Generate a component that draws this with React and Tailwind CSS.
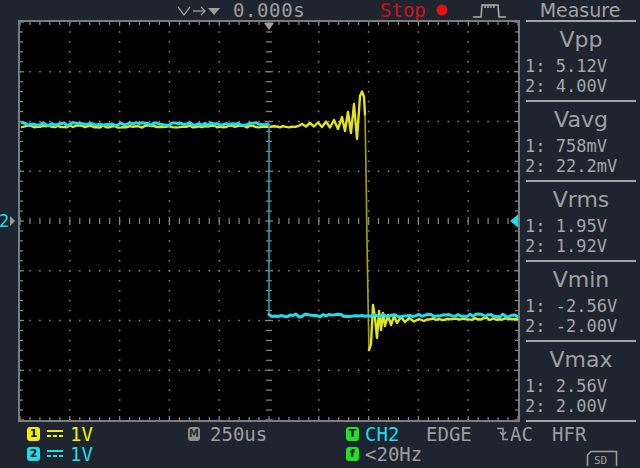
import React from 'react';

const W = 498;
const H = 398;
const CX = 249;
const CY = 199;

const rnd = (i) => {
  const s = Math.sin(i * 12.9898 + 78.233) * 43758.5453;
  return s - Math.floor(s);
};

// flat part of a trace with a little noise, in screen coords
const noisy = (x0, x1, y, amp, seed, step = 3) => {
  const pts = [];
  for (let x = x0; x <= x1; x += step) {
    pts.push([x, +(y + (rnd(x + seed) - 0.5) * amp).toFixed(1)]);
  }
  return pts;
};

const toStr = (pts) => pts.map((p) => p.join(',')).join(' ');

const ringHigh = [
  [302, 124], [306, 126.5], [310, 123], [314, 126.5], [318, 122.5], [322, 127],
  [326, 121.5], [330, 127.5], [334, 120], [338, 129], [342, 117], [345, 131],
  [348, 112], [351, 133], [354, 104], [357, 139], [360, 96], [362, 91.5],
  [364, 97], [365, 115],
];

const ringLow = [
  [369, 350], [371, 344], [373, 305], [375, 318], [377, 338], [379, 311],
  [381, 330], [383, 313], [385, 326], [388, 315], [391, 325], [394, 316],
  [397, 323], [401, 317], [405, 322], [409, 318], [414, 321.5], [419, 319],
  [424, 321],
];

const yellowA = [...noisy(22, 299, 126.5, 2.2, 700), ...ringHigh];
const yellowB = [...ringLow, ...noisy(427, 518, 319, 2.2, 900)];
const cyanHigh = noisy(22, 269, 124, 2.8, 0);
const cyanLow = noisy(269, 518, 315.5, 2.8, 300);

const Screen = () => {
  const vLines = [1, 2, 3, 4, 6, 7, 8, 9].map((i) => (i * W) / 10);
  const hLines = [1, 2, 3, 5, 6, 7].map((i) => (i * H) / 8);
  const xTicks = Array.from({ length: 51 }, (_, i) => (i * W) / 50);
  const yTicks = Array.from({ length: 41 }, (_, i) => (i * H) / 40);
  const grid = '#8a8a8a';

  return (
    <svg width={W} height={H} viewBox={`0 0 ${W} ${H}`} className="block">
      {vLines.map((x) => (
        <line key={'v' + x} x1={x} y1={0} x2={x} y2={H} stroke={grid} strokeWidth="1.5" strokeDasharray="1.5 8.45" strokeDashoffset="0.75" />
      ))}
      {hLines.map((y) => (
        <line key={'h' + y} x1={0} y1={y} x2={W} y2={y} stroke={grid} strokeWidth="1.5" strokeDasharray="1.5 8.46" strokeDashoffset="0.75" />
      ))}
      {xTicks.map((x, i) => (
        <g key={'xt' + i} stroke={grid} strokeWidth="1.2">
          <line x1={x} y1={0} x2={x} y2={i % 5 === 0 ? 4 : 3} />
          <line x1={x} y1={H} x2={x} y2={H - (i % 5 === 0 ? 4 : 3)} />
          <line x1={x} y1={CY - (i % 5 === 0 ? 4 : 3)} x2={x} y2={CY + (i % 5 === 0 ? 4 : 3)} />
        </g>
      ))}
      {yTicks.map((y, i) => (
        <g key={'yt' + i} stroke={grid} strokeWidth="1.2">
          <line x1={0} y1={y} x2={i % 5 === 0 ? 4 : 3} y2={y} />
          <line x1={W} y1={y} x2={W - (i % 5 === 0 ? 4 : 3)} y2={y} />
          <line x1={CX - (i % 5 === 0 ? 4 : 3)} y1={y} x2={CX + (i % 5 === 0 ? 4 : 3)} y2={y} />
        </g>
      ))}

      {/* trigger markers */}
      <polygon points="244,1 254,1 249,8" fill="#a0a0a0" />
      <polygon points="490,199 498,192.5 498,205.5" fill="#1fdcea" />

      {/* traces, in screen coords */}
      <g transform="translate(-20,-22)" fill="none" strokeLinejoin="round" strokeLinecap="round">
        <polyline points={toStr(yellowA)} stroke="#e4e41c" strokeWidth="2.4" />
        <polyline points="365,115 366,170 367,240 368,300 369,350" stroke="#a3a31a" strokeWidth="1.6" />
        <polyline points={toStr(yellowB)} stroke="#e4e41c" strokeWidth="2.4" />
        <polyline points={toStr(cyanHigh)} stroke="#1fdcea" strokeWidth="3" />
        <line x1="269" y1="124" x2="269" y2="316" stroke="#2b9fae" strokeWidth="1.6" />
        <polyline points={toStr(cyanLow)} stroke="#1fdcea" strokeWidth="3" />
      </g>
    </svg>
  );
};

const measures = [
  ['Vpp', '5.12V', '4.00V'],
  ['Vavg', '758mV', '22.2mV'],
  ['Vrms', '1.95V', '1.92V'],
  ['Vmin', '-2.56V', '-2.00V'],
  ['Vmax', '2.56V', '2.00V'],
];

const Badge = ({ children, color }) => (
  <span className={`w-[13px] h-[14px] shrink-0 rounded-[3px] ${color} text-[#111] text-[11px] font-bold leading-[14px] text-center font-['DejaVu_Sans',sans-serif]`}>
    {children}
  </span>
);

const DC = ({ color }) => (
  <svg width="16" height="10" viewBox="0 0 16 10" className="shrink-0">
    <line x1="0" y1="2" x2="16" y2="2" stroke={color} strokeWidth="2" />
    <line x1="0" y1="7" x2="16" y2="7" stroke={color} strokeWidth="2" strokeDasharray="4 2" />
  </svg>
);

export default function App() {
  const mono = "font-['DejaVu_Sans_Mono','Liberation_Mono',monospace]";
  return (
    <div className="w-[640px] h-[468px] bg-[#1e2430] overflow-hidden flex flex-col text-[#9e9e9e]">
      {/* top bar */}
      <div className="flex h-[20px] shrink-0">
        <div className={`w-[520px] flex items-center ${mono} text-[19px] leading-[20px]`}>
          <svg width="42" height="14" viewBox="0 0 42 14" className="ml-[178px] shrink-0" fill="none" stroke="#9e9e9e" strokeWidth="1.3">
            <polyline points="0,4 6,12 12,4" />
            <line x1="15" y1="8" x2="27" y2="8" />
            <polyline points="23,4 27,8 23,12" />
            <polygon points="30,5 42,5 36,12" fill="#9e9e9e" stroke="none" />
          </svg>
          <span className="ml-[13px] w-[76px] shrink-0 whitespace-nowrap tracking-[0.6px]">0.000s</span>
          <span className="ml-[71px] w-[46px] shrink-0 text-[#d01414]">Stop</span>
          <svg width="12" height="12" viewBox="0 0 12 12" className="ml-[10px] shrink-0">
            <circle cx="6" cy="6" r="5.5" fill="#e01212" />
          </svg>
          <svg width="33" height="16" viewBox="0 0 33 16" className="ml-[25px] shrink-0" fill="none" stroke="#b0b0b0" strokeWidth="1.5">
            <polyline points="0,15 8,15 9,3 25,3 26,15 33,15" />
            <line x1="12" y1="3" x2="12" y2="6" />
            <line x1="15" y1="3" x2="15" y2="6" />
            <line x1="18" y1="3" x2="18" y2="6" />
            <line x1="21" y1="3" x2="21" y2="6" />
          </svg>
        </div>
        <div className="w-[120px] text-center text-[19px] leading-[20px] font-['DejaVu_Sans',sans-serif] text-[#a2a2a2]">
          Measure
        </div>
      </div>

      {/* middle */}
      <div className="flex h-[402px] shrink-0">
        <div className="w-[18px] shrink-0 pt-[193px]">
          <div className="flex items-center h-[16px]">
            <span className={`${mono} text-[17px] leading-[16px] text-[#1fdcea] -ml-[1px]`}>2</span>
            <svg width="5" height="10" viewBox="0 0 5 10" className="ml-[1px]">
              <polygon points="0,0 5,5 0,10" fill="#9a9a9a" />
            </svg>
          </div>
        </div>
        <div className="w-[502px] h-[402px] shrink-0 border-2 border-[#7c7c7c] bg-black">
          <Screen />
        </div>
        <div className="w-[120px] shrink-0">
          <div className="ml-[6px] mr-[4px] border-b-2 border-[#a5a5a5]">
            {measures.map(([name, a, b]) => (
              <div key={name} className="h-[80px] border-t-2 border-[#a5a5a5] pt-[6px]">
                <div className="h-[24px] leading-[24px] text-center text-[22px] font-['DejaVu_Sans',sans-serif] text-[#a0a0a0]">
                  {name}
                </div>
                <div className={`mt-[4px] -ml-[1px] ${mono} text-[17px] leading-[20px] whitespace-pre text-[#a6a6a6]`}>
                  <div>1: {a}</div>
                  <div>2: {b}</div>
                </div>
              </div>
            ))}
          </div>
        </div>
      </div>

      {/* bottom bar */}
      <div className={`flex-1 pt-[2px] ${mono} text-[19px] leading-[20px]`}>
        <div className="flex h-[20px] items-center">
          <div className="w-[188px] pl-[27px] flex items-center shrink-0">
            <Badge color="bg-[#f0f000]">1</Badge>
            <span className="ml-[7px]"><DC color="#f0f000" /></span>
            <span className="ml-[7px] text-[#f0f000]">1V</span>
          </div>
          <div className="w-[158px] flex items-center shrink-0">
            <span className="w-[12px] h-[14px] rounded-[3px] bg-[#8e8e8e] text-[#2a2e36] text-[10px] font-bold leading-[14px] text-center font-['DejaVu_Sans',sans-serif]">
              M
            </span>
            <span className="ml-[10px]">250us</span>
          </div>
          <div className="flex items-center">
            <Badge color="bg-[#22e022]">T</Badge>
            <span className="ml-[6px] w-[61px] text-[#1fdcea]">CH2</span>
            <span className="w-[71px]">EDGE</span>
            <svg width="11" height="14" viewBox="0 0 11 14" fill="none" stroke="#9e9e9e" strokeWidth="1.5">
              <polyline points="0,1.5 6,1.5 6,12.5 11,12.5" />
              <polyline points="3,5 6,8 9,5" />
            </svg>
            <span className="ml-[2px] w-[42px]">AC</span>
            <span>HFR</span>
          </div>
        </div>
        <div className="flex h-[20px] items-center">
          <div className="w-[188px] pl-[27px] flex items-center shrink-0">
            <Badge color="bg-[#1fdcea]">2</Badge>
            <span className="ml-[7px]"><DC color="#1fdcea" /></span>
            <span className="ml-[7px] text-[#1fdcea]">1V</span>
          </div>
          <div className="w-[158px] shrink-0" />
          <div className="flex items-center flex-1">
            <Badge color="bg-[#22e022]">f</Badge>
            <span className="ml-[6px]">&lt;20Hz</span>
            <svg width="32" height="16" viewBox="0 0 32 16" className="ml-auto mr-[22px] mt-[8px]">
              <path d="M1.5,16 L1.5,5 L5,1.5 L30.5,1.5 L30.5,16" fill="none" stroke="#a0a0a0" strokeWidth="1.5" />
              <text x="8" y="14" fontSize="11" fill="#a0a0a0" fontFamily="DejaVu Sans Mono, monospace">SD</text>
            </svg>
          </div>
        </div>
      </div>
    </div>
  );
}
